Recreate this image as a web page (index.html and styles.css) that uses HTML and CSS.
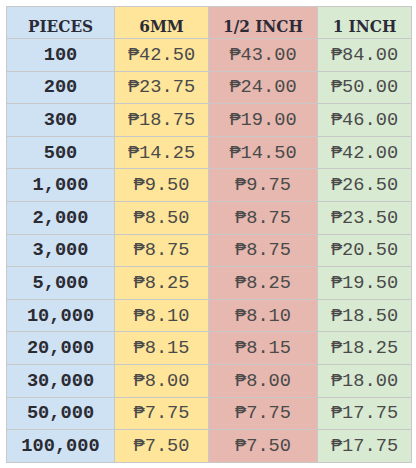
FILE: index.html
```html
<!DOCTYPE html>
<html>
<head>
<meta charset="utf-8">
<link rel="stylesheet" href="styles.css">
</head>
<body>
<table class="prices">
  <colgroup>
    <col class="c1"><col class="c2"><col class="c3"><col class="c4">
  </colgroup>
  <thead>
    <tr>
      <th class="blue">PIECES</th>
      <th class="yellow">6MM</th>
      <th class="red">1/2 INCH</th>
      <th class="green">1 INCH</th>
    </tr>
  </thead>
  <tbody>
    <tr><td class="blue qty">100</td><td class="yellow">₱42.50</td><td class="red">₱43.00</td><td class="green">₱84.00</td></tr>
    <tr><td class="blue qty">200</td><td class="yellow">₱23.75</td><td class="red">₱24.00</td><td class="green">₱50.00</td></tr>
    <tr><td class="blue qty">300</td><td class="yellow">₱18.75</td><td class="red">₱19.00</td><td class="green">₱46.00</td></tr>
    <tr><td class="blue qty">500</td><td class="yellow">₱14.25</td><td class="red">₱14.50</td><td class="green">₱42.00</td></tr>
    <tr><td class="blue qty">1,000</td><td class="yellow">₱9.50</td><td class="red">₱9.75</td><td class="green">₱26.50</td></tr>
    <tr><td class="blue qty">2,000</td><td class="yellow">₱8.50</td><td class="red">₱8.75</td><td class="green">₱23.50</td></tr>
    <tr><td class="blue qty">3,000</td><td class="yellow">₱8.75</td><td class="red">₱8.75</td><td class="green">₱20.50</td></tr>
    <tr><td class="blue qty">5,000</td><td class="yellow">₱8.25</td><td class="red">₱8.25</td><td class="green">₱19.50</td></tr>
    <tr><td class="blue qty">10,000</td><td class="yellow">₱8.10</td><td class="red">₱8.10</td><td class="green">₱18.50</td></tr>
    <tr><td class="blue qty">20,000</td><td class="yellow">₱8.15</td><td class="red">₱8.15</td><td class="green">₱18.25</td></tr>
    <tr><td class="blue qty">30,000</td><td class="yellow">₱8.00</td><td class="red">₱8.00</td><td class="green">₱18.00</td></tr>
    <tr><td class="blue qty">50,000</td><td class="yellow">₱7.75</td><td class="red">₱7.75</td><td class="green">₱17.75</td></tr>
    <tr><td class="blue qty">100,000</td><td class="yellow">₱7.50</td><td class="red">₱7.50</td><td class="green">₱17.75</td></tr>
  </tbody>
</table>
</body>
</html>
```
FILE: styles.css
```css
html, body {
  margin: 0;
  padding: 0;
  background: #ffffff;
}
body {
  padding: 6px;
}
.prices {
  border-collapse: collapse;
  table-layout: fixed;
  width: 405px;
}
.c1 { width: 108px; }
.c2 { width: 94px; }
.c3 { width: 109px; }
.c4 { width: 94px; }
.prices th,
.prices td {
  border: 1px solid #c8c8c8;
  text-align: center;
  vertical-align: middle;
  padding: 0;
  height: 31.6px;
  white-space: nowrap;
  overflow: hidden;
}
.prices th {
  font-family: "DejaVu Serif Condensed", "DejaVu Serif", serif;
  font-stretch: condensed;
  font-weight: bold;
  font-size: 17px;
  line-height: 20px;
  color: #2b2b38;
  height: 32px;
  box-sizing: border-box;
  padding-top: 6px;
}
.prices td {
  font-family: "Liberation Mono", "DejaVu Sans Mono", monospace;
  font-size: 18.67px;
  color: #4a4a4a;
}
.prices td.qty {
  font-weight: bold;
  color: #2b2b33;
}
.blue { background: #cfe2f3; }
.yellow { background: #ffe599; }
.red { background: #e6b8af; }
.green { background: #d9ead3; }
```
